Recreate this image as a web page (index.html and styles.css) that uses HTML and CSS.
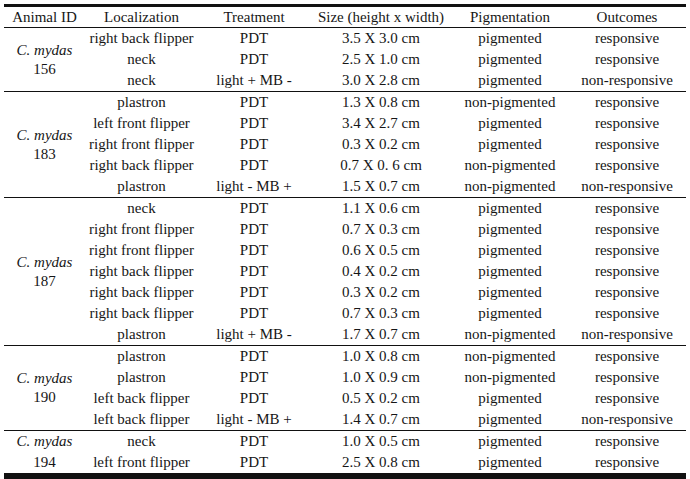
FILE: index.html
```html
<!DOCTYPE html>
<html>
<head>
<meta charset="utf-8">
<link rel="stylesheet" href="styles.css">
</head>
<body>
<table class="data">
  <colgroup>
    <col class="c-id"><col class="c-loc"><col class="c-trt"><col class="c-size"><col class="c-pig"><col class="c-out">
  </colgroup>
  <thead>
    <tr><th>Animal ID</th><th>Localization</th><th>Treatment</th><th>Size (height x width)</th><th>Pigmentation</th><th>Outcomes</th></tr>
  </thead>
  <tbody>
    <tr><td rowspan="3" class="id"><i>C. mydas</i><br>156</td><td>right back flipper</td><td>PDT</td><td>3.5 X 3.0 cm</td><td>pigmented</td><td>responsive</td></tr>
    <tr><td>neck</td><td>PDT</td><td>2.5 X 1.0 cm</td><td>pigmented</td><td>responsive</td></tr>
    <tr><td>neck</td><td>light + MB -</td><td>3.0 X 2.8 cm</td><td>pigmented</td><td>non-responsive</td></tr>
  </tbody>
  <tbody>
    <tr><td rowspan="5" class="id"><i>C. mydas</i><br>183</td><td>plastron</td><td>PDT</td><td>1.3 X 0.8 cm</td><td>non-pigmented</td><td>responsive</td></tr>
    <tr><td>left front flipper</td><td>PDT</td><td>3.4 X 2.7 cm</td><td>pigmented</td><td>responsive</td></tr>
    <tr><td>right front flipper</td><td>PDT</td><td>0.3 X 0.2 cm</td><td>pigmented</td><td>responsive</td></tr>
    <tr><td>right back flipper</td><td>PDT</td><td>0.7 X 0. 6 cm</td><td>non-pigmented</td><td>responsive</td></tr>
    <tr><td>plastron</td><td>light - MB +</td><td>1.5 X 0.7 cm</td><td>non-pigmented</td><td>non-responsive</td></tr>
  </tbody>
  <tbody>
    <tr><td rowspan="7" class="id"><i>C. mydas</i><br>187</td><td>neck</td><td>PDT</td><td>1.1 X 0.6 cm</td><td>pigmented</td><td>responsive</td></tr>
    <tr><td>right front flipper</td><td>PDT</td><td>0.7 X 0.3 cm</td><td>pigmented</td><td>responsive</td></tr>
    <tr><td>right front flipper</td><td>PDT</td><td>0.6 X 0.5 cm</td><td>pigmented</td><td>responsive</td></tr>
    <tr><td>right back flipper</td><td>PDT</td><td>0.4 X 0.2 cm</td><td>pigmented</td><td>responsive</td></tr>
    <tr><td>right back flipper</td><td>PDT</td><td>0.3 X 0.2 cm</td><td>pigmented</td><td>responsive</td></tr>
    <tr><td>right back flipper</td><td>PDT</td><td>0.7 X 0.3 cm</td><td>pigmented</td><td>responsive</td></tr>
    <tr><td>plastron</td><td>light + MB -</td><td>1.7 X 0.7 cm</td><td>non-pigmented</td><td>non-responsive</td></tr>
  </tbody>
  <tbody>
    <tr><td rowspan="4" class="id"><i>C. mydas</i><br>190</td><td>plastron</td><td>PDT</td><td>1.0 X 0.8 cm</td><td>non-pigmented</td><td>responsive</td></tr>
    <tr><td>plastron</td><td>PDT</td><td>1.0 X 0.9 cm</td><td>non-pigmented</td><td>responsive</td></tr>
    <tr><td>left back flipper</td><td>PDT</td><td>0.5 X 0.2 cm</td><td>pigmented</td><td>responsive</td></tr>
    <tr><td>left back flipper</td><td>light - MB +</td><td>1.4 X 0.7 cm</td><td>pigmented</td><td>non-responsive</td></tr>
  </tbody>
  <tbody class="last">
    <tr><td class="id2"><i>C. mydas</i></td><td>neck</td><td>PDT</td><td>1.0 X 0.5 cm</td><td>pigmented</td><td>responsive</td></tr>
    <tr><td class="id2">194</td><td>left front flipper</td><td>PDT</td><td>2.5 X 0.8 cm</td><td>pigmented</td><td>responsive</td></tr>
  </tbody>
</table>
</body>
</html>
```

FILE: styles.css
```css
html, body {
  margin: 0;
  padding: 0;
  background: #ffffff;
}
body {
  padding: 4px 0 0 4px;
  color: #161616;
}
.data {
  border-collapse: collapse;
  width: 682px;
  table-layout: fixed;
  font-family: "Liberation Serif", "Tinos", "Times New Roman", "DejaVu Serif", serif;
  font-size: 15px;
}
.c-id { width: 81px; }
.c-loc { width: 113px; }
.c-trt { width: 112px; }
.c-size { width: 142px; }
.c-pig { width: 116px; }
.c-out { width: 118px; }
.data thead tr {
  border-top: 3px solid #111;
  border-bottom: 1px solid #111;
}
.data th {
  font-family: "Liberation Serif", "Tinos", "Times New Roman", "DejaVu Serif", serif;
  font-weight: normal;
  height: 20px;
  line-height: 20px;
  padding: 0;
  text-align: center;
  white-space: nowrap;
}
.data tbody {
  border-top: 1px solid #111;
}
.data td {
  font-family: "Liberation Serif", "Tinos", "Times New Roman", "DejaVu Serif", serif;
  height: 21px;
  line-height: 21px;
  padding: 0;
  text-align: center;
  white-space: nowrap;
}
.data td.id {
  line-height: 19px;
  vertical-align: middle;
}
.data tbody.last {
  border-bottom: 6px solid #111;
}
```
